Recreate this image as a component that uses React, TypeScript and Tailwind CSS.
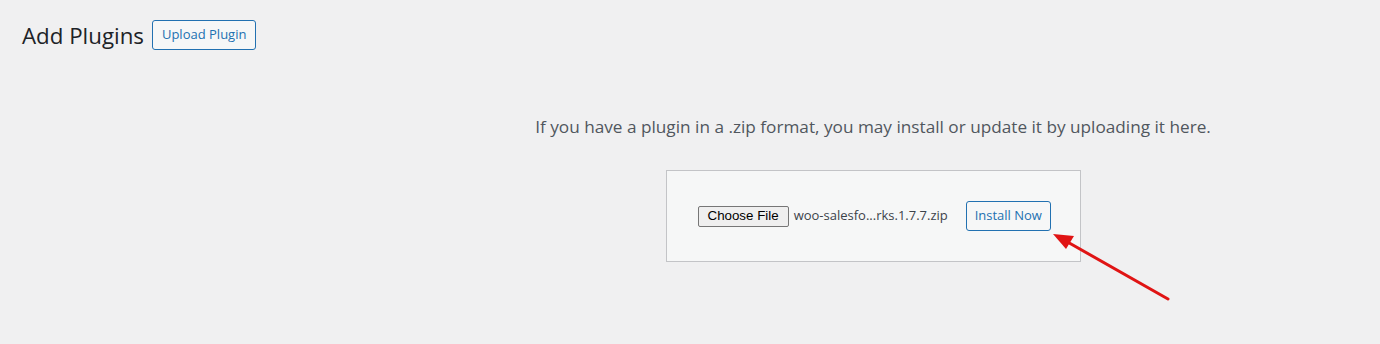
import React from 'react';

const font = "font-['Segoe_UI','Open_Sans',sans-serif]";

const Arrow: React.FC = () => (
  <svg
    className="absolute left-[1040px] top-[220px] pointer-events-none"
    width="150"
    height="90"
    viewBox="0 0 150 90"
  >
    <line x1="128" y1="79" x2="24" y2="20" stroke="#e01414" strokeWidth="3" strokeLinecap="round" />
    <polygon points="13,14 34,16 26,29" fill="#e01414" />
  </svg>
);

const App: React.FC = () => {
  return (
    <div className={`relative w-[1380px] h-[344px] bg-[#f0f0f1] overflow-hidden ${font}`}>
      {/* Heading */}
      <div className="flex items-center gap-[8px] pl-[22px] pt-[20px]">
        <h1 className="text-[22.3px] leading-[29px] text-[#1d2327] font-normal">Add Plugins</h1>
        <button className="h-[30px] px-[9px] border border-[#2271b1] rounded-[3px] text-[13px] text-[#2271b1] bg-[#f6f7f7]">
          Upload Plugin
        </button>
      </div>

      {/* Upload area */}
      <div className="flex flex-col items-center pl-[366px] pt-[66px]">
        <p className="text-[17.2px] leading-[22px] text-[#50575e]">
          If you have a plugin in a .zip format, you may install or update it by uploading it here.
        </p>
        <div className="mt-[32px] w-[415px] h-[92px] border border-[#c3c4c7] bg-[#f6f7f7] flex items-center pl-[31px]">
          <div className="flex items-center">
            <span className="h-[21px] px-[9px] flex items-center border border-[#767676] rounded-[2px] bg-[#efefef] text-[13.33px] text-black font-['Liberation_Sans',Arial,sans-serif]">
              Choose File
            </span>
            <span className="ml-[5px] text-[13px] text-[#3c434a]">woo-salesfo...rks.1.7.7.zip</span>
          </div>
          <button className="ml-[18px] h-[30px] w-[85px] border border-[#2271b1] rounded-[3px] text-[13px] text-[#2271b1] bg-[#f6f7f7]">
            Install Now
          </button>
        </div>
      </div>

      <Arrow />
    </div>
  );
};

export default App;
